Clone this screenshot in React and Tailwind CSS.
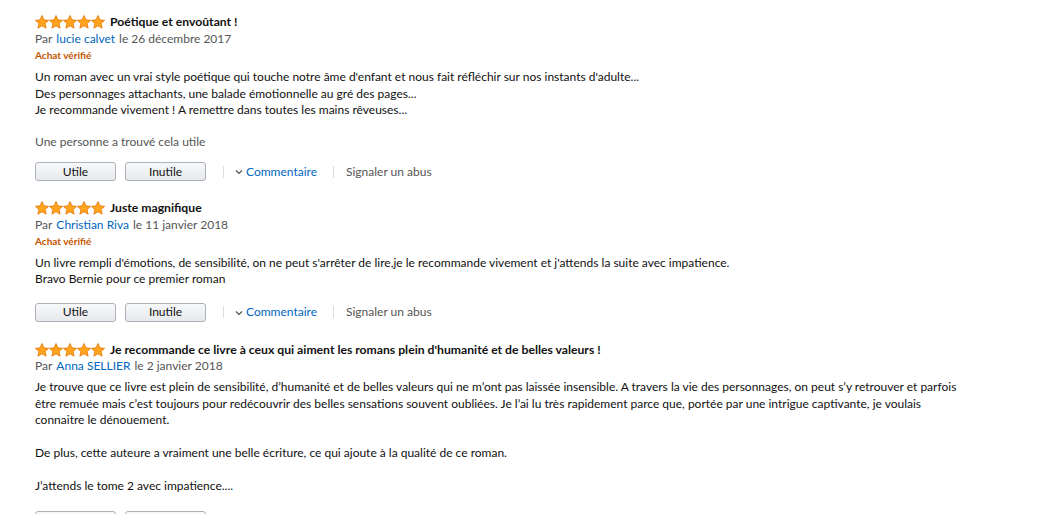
const FONT = { fontFamily: "Lato, 'Liberation Sans', sans-serif" };

function Star() {
  return (
    <svg width="14" height="14" viewBox="1 1 22 22" className="block">
      <path
        d="M12 1.8l3.1 6.8 7.3.8-5.5 5 1.6 7.3L12 18l-6.5 3.7 1.6-7.3-5.5-5 7.3-.8z"
        fill="#FFA41C"
        stroke="#E47911"
        strokeWidth="1.3"
        strokeLinejoin="round"
      />
    </svg>
  );
}

function Stars() {
  return (
    <div className="flex items-center">
      <Star />
      <Star />
      <Star />
      <Star />
      <Star />
    </div>
  );
}

function Actions({ mt }) {
  return (
    <div className={`flex items-center ${mt}`}>
      <button className="w-[81px] h-[19px] rounded-[3px] border border-[#adb1b8] bg-gradient-to-b from-[#f7f8fa] to-[#e7e9ec] text-[12px] leading-none text-[#111]">
        Utile
      </button>
      <button className="ml-[9px] w-[81px] h-[19px] rounded-[3px] border border-[#adb1b8] bg-gradient-to-b from-[#f7f8fa] to-[#e7e9ec] text-[12px] leading-none text-[#111]">
        Inutile
      </button>
      <span className="ml-[17px] w-px h-[12px] bg-[#ddd]" />
      <span className="ml-[11px] flex items-center text-[#0066c0] text-[12px]">
        <svg width="8" height="6" viewBox="0 0 8 6" className="mr-[3px] mt-[1px]">
          <path d="M1 1.5l3 3 3-3" fill="none" stroke="#555" strokeWidth="1.2" />
        </svg>
        Commentaire
      </span>
      <span className="ml-[16px] w-px h-[12px] bg-[#ddd]" />
      <span className="ml-[12px] text-[#555] text-[12px]">Signaler un abus</span>
    </div>
  );
}

function Review({ title, author, date, verified, children, helpful, actionsMt, bodyMt, className = "" }) {
  return (
    <div className={`flex flex-col ${className}`}>
      <div className="flex items-center h-[16.5px]">
        <Stars />
        <span className="ml-[5px] text-[12.2px] font-bold text-[#111]">{title}</span>
      </div>
      <div className="h-[16.5px] flex items-center text-[12px] text-[#555]">
        Par<span className="ml-[4px] text-[#0066c0]">{author}</span>
        <span className="ml-[4px]">{date}</span>
      </div>
      {verified && (
        <div className="h-[16.5px] flex items-center text-[10px] font-bold text-[#c45500]">Achat vérifié</div>
      )}
      <div className={`${bodyMt} text-[12px] leading-[16.5px] text-[#111]`}>{children}</div>
      {helpful && <div className="mt-[15px] text-[12px] leading-[16.5px] text-[#555]">{helpful}</div>}
      <Actions mt={actionsMt} />
    </div>
  );
}

export default function App() {
  return (
    <div className="bg-white w-[1040px] h-[514px] overflow-hidden pl-[35px] pt-[14px] flex flex-col" style={FONT}>
      <Review
        title="Poétique et envoûtant !"
        author="lucie calvet"
        date="le 26 décembre 2017"
        verified
        bodyMt="mt-[5.5px]"
        helpful="Une personne a trouvé cela utile"
        actionsMt="mt-[12px]"
      >
        Un roman avec un vrai style poétique qui touche notre âme d'enfant et nous fait réfléchir sur nos instants d'adulte...
        <br />
        Des personnages attachants, une balade émotionnelle au gré des pages...
        <br />
        Je recommande vivement ! A remettre dans toutes les mains rêveuses...
      </Review>
      <Review
        className="mt-[19px]"
        title="Juste magnifique"
        author="Christian Riva"
        date="le 11 janvier 2018"
        verified
        bodyMt="mt-[5px]"
        actionsMt="mt-[15px]"
      >
        Un livre rempli d'émotions, de sensibilité, on ne peut s'arrêter de lire,je le recommande vivement et j'attends la suite avec impatience.
        <br />
        Bravo Bernie pour ce premier roman
      </Review>
      <Review
        className="mt-[20px]"
        title="Je recommande ce livre à ceux qui aiment les romans plein d'humanité et de belles valeurs !"
        author="Anna SELLIER"
        date="le 2 janvier 2018"
        bodyMt="mt-[4.5px]"
        actionsMt="mt-[16px]"
      >
        Je trouve que ce livre est plein de sensibilité, d’humanité et de belles valeurs qui ne m’ont pas laissée insensible. A travers la vie des personnages, on peut s’y retrouver et parfois
        <br />
        être remuée mais c’est toujours pour redécouvrir des belles sensations souvent oubliées. Je l’ai lu très rapidement parce que, portée par une intrigue captivante, je voulais
        <br />
        connaitre le dénouement.
        <br />
        <br />
        De plus, cette auteure a vraiment une belle écriture, ce qui ajoute à la qualité de ce roman.
        <br />
        <br />
        J’attends le tome 2 avec impatience....
      </Review>
    </div>
  );
}
